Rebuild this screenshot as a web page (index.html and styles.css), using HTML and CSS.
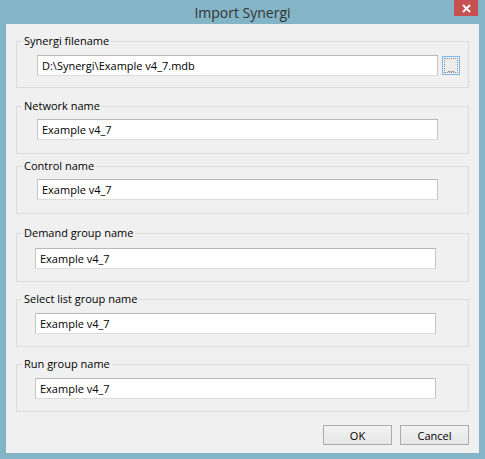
FILE: index.html
```html
<!DOCTYPE html>
<html>
<head>
<meta charset="utf-8">
<link rel="stylesheet" href="styles.css">
</head>
<body>
<div class="window">
  <div class="titlebar">
    <span class="title">Import Synergi</span>
    <span class="close"><svg width="9" height="9" viewBox="0 0 9 9"><path d="M1 1L8 8M8 1L1 8" stroke="#fff" stroke-width="1.8"/></svg></span>
  </div>
  <div class="content">
    <div class="group g1">
      <span class="legend">Synergi filename</span>
      <div class="row">
        <div class="input">D:\Synergi\Example v4_7.mdb</div>
        <div class="browse"><span class="focus">...</span></div>
      </div>
    </div>
    <div class="group g2">
      <span class="legend">Network name</span>
      <div class="row"><div class="input">Example v4_7</div></div>
    </div>
    <div class="group g3">
      <span class="legend">Control name</span>
      <div class="row"><div class="input">Example v4_7</div></div>
    </div>
    <div class="group g4">
      <span class="legend">Demand group name</span>
      <div class="row"><div class="input">Example v4_7</div></div>
    </div>
    <div class="group g5">
      <span class="legend">Select list group name</span>
      <div class="row"><div class="input">Example v4_7</div></div>
    </div>
    <div class="group g6">
      <span class="legend">Run group name</span>
      <div class="row"><div class="input">Example v4_7</div></div>
    </div>
    <div class="buttons">
      <div class="btn">OK</div>
      <div class="btn">Cancel</div>
    </div>
  </div>
</div>
</body>
</html>
```

FILE: styles.css
```css
* { box-sizing: border-box; }
html, body { margin: 0; padding: 0; }
body {
  width: 485px;
  height: 459px;
  overflow: hidden;
  font-family: "Open Sans", "Noto Sans", sans-serif;
  font-size: 11px;
  color: #000;
}
.window {
  width: 485px;
  height: 459px;
  background: #83b5c6;
  padding: 0 6px 6px 6px;
  display: flex;
  flex-direction: column;
}
.titlebar {
  height: 24px;
  position: relative;
  display: flex;
  align-items: center;
  justify-content: center;
}
.title {
  font-size: 14px;
  color: #333;
  padding-top: 1px;
}
.close {
  position: absolute;
  right: 1px;
  top: 0;
  width: 24px;
  height: 16px;
  background: #c75050;
  display: flex;
  align-items: center;
  justify-content: center;
}
.content {
  flex: 1;
  background: #f0f0f0;
  padding: 17px 0 0 10px;
  display: flex;
  flex-direction: column;
}
.group {
  position: relative;
  width: 453px;
  height: 48px;
  border: 1px solid #dcdcdc;
}
.g1 { height: 47px; padding-top: 13px; padding-left: 20px; }
.g2 { margin-top: 18px; padding-top: 12px; padding-left: 20px; }
.g3 { margin-top: 12px; padding-top: 12px; padding-left: 20px; }
.g4 { margin-top: 19px; height: 49px; padding-top: 14px; padding-left: 18px; }
.g5 { margin-top: 17px; padding-top: 13px; padding-left: 18px; }
.g6 { margin-top: 17px; padding-top: 13px; padding-left: 18px; }
.legend {
  position: absolute;
  left: 5px;
  top: -9px;
  padding: 0 2px;
  background: #f0f0f0;
  line-height: 16px;
}
.row {
  display: flex;
  align-items: flex-start;
  gap: 4px;
}
.input {
  width: 401px;
  height: 21px;
  background: #fff;
  border: 1px solid #c4c4c8;
  border-bottom-color: #dcdcdc;
  border-top-color: #b8b8bc;
  padding: 0 4px;
  line-height: 19px;
}
.browse {
  margin-top: 1px;
  width: 18px;
  height: 19px;
  border: 1px solid #7eb4ea;
  background: #eef4f8;
  padding: 1px;
}
.focus {
  display: block;
  width: 100%;
  height: 100%;
  border: 1px dotted #8a8a8a;
  background: #ececec;
  font-size: 9px;
  line-height: 19px;
  text-align: center;
  color: #333;
}
.buttons {
  display: flex;
  justify-content: flex-end;
  gap: 8px;
  margin-top: 13px;
  width: 453px;
}
.btn {
  width: 69px;
  height: 20px;
  border: 1px solid #acacac;
  background: linear-gradient(#f2f2f2, #e6e6e6);
  display: flex;
  align-items: center;
  justify-content: center;
}
```
